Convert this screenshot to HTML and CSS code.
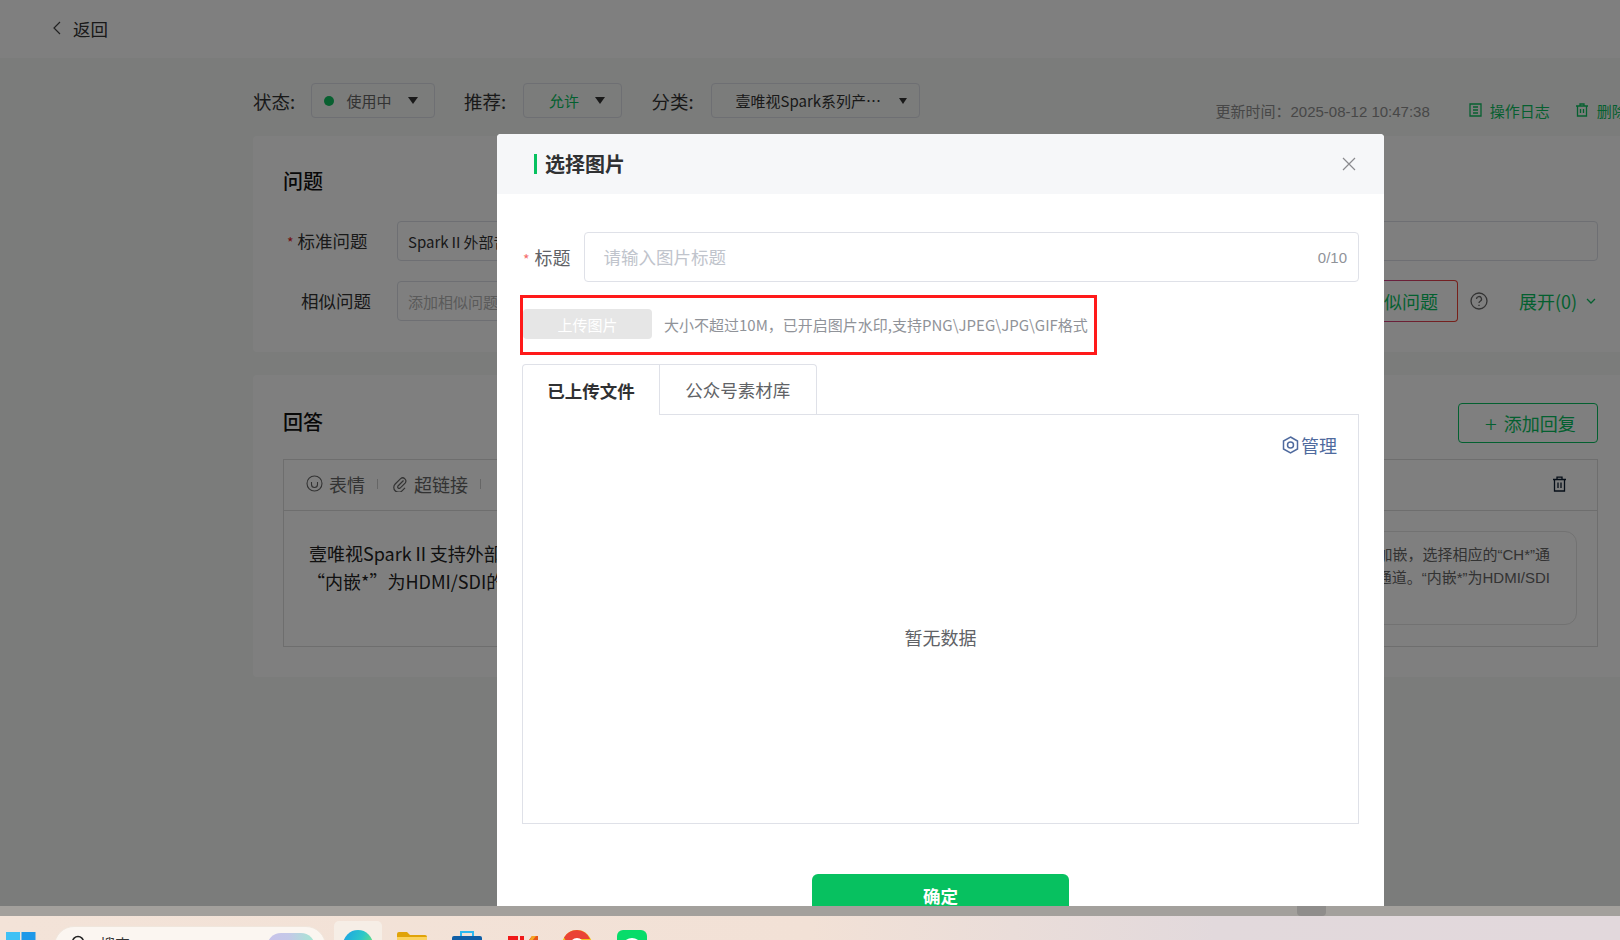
FILE: index.html
```html
<!DOCTYPE html>
<html lang="zh-CN">
<head>
<meta charset="utf-8">
<title>选择图片</title>
<link rel="stylesheet" href="styles.css">
</head>
<body>
<div class="app">
  <div class="stage">
    <header class="topbar">
      <svg class="back-icon" width="10" height="14" viewBox="0 0 10 14"><path d="M8 1 2 7l6 6" fill="none" stroke="#444" stroke-width="1.2"/></svg>
      <span class="back-text">返回</span>
    </header>
    <main class="content">
      <div class="toolbar">
        <span class="tool-label tool-label-first">状态:</span>
        <div class="select select-status"><i class="dot"></i><span class="select-text">使用中</span><i class="caret"></i></div>
        <span class="tool-label tool-label-next">推荐:</span>
        <div class="select select-rec"><span class="select-text select-green">允许</span><i class="caret"></i></div>
        <span class="tool-label tool-label-cat">分类:</span>
        <div class="select select-cat"><span class="select-text select-dark">壹唯视Spark系列产…</span><i class="caret caret-small"></i></div>
        <div class="meta">
          <span class="updated">更新时间：2025-08-12 10:47:38</span>
          <span class="meta-link">
            <svg width="13" height="14" viewBox="0 0 13 14"><path d="M1 1h11v12H1zM4 4h5M4 7h5M4 10h5" fill="none" stroke="#0cc060" stroke-width="1.3"/></svg>
            操作日志
          </span>
          <span class="meta-link meta-link-del">
            <svg width="14" height="14" viewBox="0 0 14 14"><path d="M1 3h12M5 3V1h4v2M2.500 3v10h9V3M5.500 6v4M8.500 6v4" fill="none" stroke="#0cc060" stroke-width="1.3"/></svg>
            删除
          </span>
        </div>
      </div>
      <section class="card card-question">
        <h2 class="card-title">问题</h2>
        <div class="q-row">
          <label class="q-label"><em class="star">*</em>标准问题</label>
          <div class="q-input q-value">SparkⅡ外部音频加嵌如何设置</div>
        </div>
        <div class="q-row q-row-similar">
          <label class="q-label">相似问题</label>
          <div class="q-input q-input-similar q-placeholder">添加相似问题</div>
          <div class="similar-btn">添加相似问题</div>
          <svg class="help-icon" width="18" height="18" viewBox="0 0 18 18"><circle cx="9" cy="9" r="8" fill="none" stroke="#666" stroke-width="1.300"/><path d="M6.500 7a2.500 2.500 0 1 1 3.700 2.200C9.400 9.700 9 10.100 9 11M9 12.700v1.200" fill="none" stroke="#666" stroke-width="1.300"/></svg>
          <span class="expand">展开(0)</span>
          <svg class="expand-icon" width="10" height="6" viewBox="0 0 10 6"><path d="m1 1 4 4 4-4" fill="none" stroke="#0cc060" stroke-width="1.300"/></svg>
        </div>
      </section>
      <section class="card card-answer">
        <div class="answer-head">
          <h2 class="card-title">回答</h2>
          <div class="add-reply"><span class="plus">+</span>添加回复</div>
        </div>
        <div class="editor">
          <div class="editor-bar">
            <svg class="tool-icon" width="17" height="17" viewBox="0 0 17 17"><circle cx="8.500" cy="8.500" r="7.500" fill="none" stroke="#666" stroke-width="1.100"/><path d="M5.500 7v2.500a3 3 0 0 0 6 0V7" fill="none" stroke="#666" stroke-width="1.100"/></svg>
            <span class="tool-text">表情</span>
            <i class="tool-sep"></i>
            <svg class="tool-icon" width="16" height="16" viewBox="0 0 16 16"><path d="M11.500 4.500 6 10a1.500 1.500 0 0 0 2.100 2.100l5-5a3.200 3.200 0 0 0-4.500-4.500L3.200 8a4.800 4.800 0 0 0 6.800 6.800l3-3" fill="none" stroke="#666" stroke-width="1.200"/></svg>
            <span class="tool-text">超链接</span>
            <i class="tool-sep"></i>
            <span class="tool-text">素材</span>
            <svg class="editor-trash" width="15" height="16" viewBox="0 0 15 16"><path d="M1 3.500h13M5 3.500V1.200h5v2.300M2.500 3.500V15h10V3.500M6 6.500v5.500M9 6.500v5.500" fill="none" stroke="#0c1c30" stroke-width="1.300"/></svg>
          </div>
          <div class="editor-body">
            <div class="answer-text">
              <p>壹唯视SparkⅡ支持外部音频加嵌，选择相应的“CH*”通道即可。</p>
              <p class="answer-second">“内嵌*”为HDMI/SDI的内嵌音频通道。</p>
            </div>
            <div class="bubble">
              <p>壹唯视SparkⅡ支持外部音频加嵌，选择相应的“CH*”通</p>
              <p>道，即可加嵌到对应通道。“内嵌*”为HDMI/SDI</p>
            </div>
          </div>
        </div>
      </section>
    </main>

    <div class="overlay"></div>

    <div class="dialog">
      <div class="dialog-head">
        <span class="dialog-title">选择图片</span>
        <svg class="dialog-close" width="14" height="14" viewBox="0 0 14 14"><path d="m1 1 12 12M13 1 1 13" fill="none" stroke="#8a8a8e" stroke-width="1.200"/></svg>
      </div>
      <div class="dialog-body">
        <div class="form-row">
          <label class="form-label"><em class="star star-light">*</em>标题</label>
          <div class="form-input">
            <span class="placeholder">请输入图片标题</span>
            <span class="counter">0/10</span>
          </div>
        </div>
        <div class="upload-row">
          <div class="upload-btn">上传图片</div>
          <span class="upload-hint">大小不超过10M，已开启图片水印,支持PNG\JPEG\JPG\GIF格式</span>
        </div>
        <div class="tabs">
          <div class="tab tab-active">已上传文件</div>
          <div class="tab">公众号素材库</div>
        </div>
        <div class="panel">
          <div class="manage">
            <svg width="17" height="18" viewBox="0 0 17 18"><path d="M8.500 1 15.500 5v8l-7 4-7-4V5z" fill="none" stroke="#4f6a9e" stroke-width="1.500"/><circle cx="8.500" cy="9" r="3" fill="none" stroke="#4f6a9e" stroke-width="1.500"/></svg>
            <span>管理</span>
          </div>
          <div class="empty">暂无数据</div>
        </div>
        <div class="dialog-foot">
          <div class="confirm">确定</div>
        </div>
      </div>
      <div class="annotation"></div>
    </div>
  </div>

  <div class="strip"><i class="strip-tile"></i></div>

  <footer class="taskbar">
    <svg class="tb-win" width="30" height="30" viewBox="0 0 30 30"><rect width="14" height="14" fill="#3fc1f5"/><rect x="15.500" width="14" height="14" fill="#1e98e8"/><rect y="15.500" width="14" height="14" fill="#1e98e8"/><rect x="15.500" y="15.500" width="14" height="14" fill="#0f6fc6"/></svg>
    <div class="tb-search">
      <svg class="tb-search-icon" width="16" height="16" viewBox="0 0 16 16"><circle cx="7" cy="7" r="5.500" fill="none" stroke="#222" stroke-width="1.500"/><path d="m11 11 4 4" stroke="#222" stroke-width="1.500"/></svg>
      <span class="tb-search-text">搜索</span>
      <span class="tb-blob"></span>
    </div>
    <div class="tb-active">
      <svg width="30" height="30" viewBox="0 0 30 30"><defs><linearGradient id="edge" x1="0" y1="0" x2="1" y2=".5"><stop offset="0" stop-color="#1ba0e8"/><stop offset=".6" stop-color="#2cc8c8"/><stop offset="1" stop-color="#6ee07a"/></linearGradient></defs><circle cx="15" cy="15" r="15" fill="url(#edge)"/><ellipse cx="12" cy="17" rx="9" ry="6" fill="#0f72c4"/></svg>
    </div>
    <svg class="tb-folder" width="30" height="30" viewBox="0 0 30 30"><path d="M0 2a2 2 0 0 1 2-2h8l3 3h15a2 2 0 0 1 2 2v25H0z" fill="#e0a308"/><rect y="5" width="30" height="25" fill="#fbd25f"/></svg>
    <svg class="tb-store" width="30" height="32" viewBox="0 0 30 32"><path d="M9 6V2h12v4" fill="none" stroke="#2bb8f0" stroke-width="2"/><path d="M0 8a2 2 0 0 1 2-2h26a2 2 0 0 1 2 2v24H0z" fill="#0f5ea6"/></svg>
    <svg class="tb-red" width="30" height="30" viewBox="0 0 30 30"><path d="M0 2h10v28H0zM12 2h4v28h-4z" fill="#f01818"/><path d="M18 10 24 2h6v6l-6 6z" fill="#e8551a"/><path d="M24 2h4l-8 10h-2z" fill="#f5a623"/></svg>
    <svg class="tb-chrome" width="30" height="30" viewBox="0 0 30 30"><circle cx="15" cy="15" r="15" fill="#f5c518"/><path d="M15 0a15 15 0 0 0-13 7.500l6.500 11L15 9h13A15 15 0 0 0 15 0z" fill="#ea4335"/><circle cx="15" cy="15" r="7" fill="#fff"/><circle cx="15" cy="15" r="5" fill="#3b7be8"/></svg>
    <svg class="tb-wechat" width="30" height="30" viewBox="0 0 30 30"><rect width="30" height="30" rx="6" fill="#07dc6a"/><ellipse cx="15" cy="14" rx="8" ry="6" fill="#fff"/></svg>
  </footer>
</div>
</body>
</html>
```
FILE: styles.css
```css
* { box-sizing: border-box; }
html, body { margin: 0; padding: 0; }
body { font-family: "Noto Sans CJK SC", "Noto Sans", sans-serif; background: #f6f8f6; color: #303133; }
p, h2 { margin: 0; }
em { font-style: normal; }

.app { width: 1620px; height: 940px; display: flex; flex-direction: column; overflow: hidden; }
.stage { position: relative; height: 906px; overflow: hidden; flex: none; }

.topbar { height: 58px; background: #fff; display: flex; align-items: center; padding: 0 0 2px 52px; }
.back-text { margin-left: 11px; font-size: 17.500px; color: #333; }

.content { margin-left: 253px; width: 1420px; }
.toolbar { display: flex; align-items: center; height: 35px; margin-top: 25px; white-space: nowrap; }
.tool-label { font-size: 18.500px; color: #333; width: 59px; }
.tool-label-first { width: 58px; }
.tool-label-next { margin-left: 29.500px; }
.tool-label-cat { margin-left: 30px; }
.select { height: 35px; border: 1px solid #dcdfe6; border-radius: 4px; display: flex; align-items: center; }
.select-status { width: 123.500px; padding-left: 11.500px; }
.select-rec { width: 98.500px; padding-left: 25px; }
.select-cat { width: 209px; padding-left: 24px; }
.dot { width: 10px; height: 10px; border-radius: 50%; background: #10c060; margin-right: 13px; }
.select-text { font-size: 15px; color: #666; }
.select-green { color: #07c160; }
.select-dark { color: #333; width: 145px; }
.caret { width: 0; height: 0; border-left: 5.500px solid transparent; border-right: 5.500px solid transparent; border-top: 7px solid #333; margin-left: auto; margin-right: 16px; }
.caret-small { border-left-width: 4.500px; border-right-width: 4.500px; border-top-width: 6px; margin-right: 12px; }
.meta { display: flex; align-items: center; margin-left: 296px; margin-top: 19px; }
.updated { font-family: "Liberation Sans", "Noto Sans CJK SC", sans-serif; font-size: 15px; color: #8f8f8f; }
.meta-link { display: flex; align-items: center; gap: 8px; margin-left: 39px; font-size: 15px; color: #0cc060; }
.meta-link-del { margin-left: 25px; }

.card { background: #fff; border-radius: 4px; padding-left: 30px; padding-right: 75px; }
.card-question { height: 216px; margin-top: 18px; }
.card-answer { height: 302px; margin-top: 23px; }
.card-title { font-size: 20px; font-weight: 500; color: #111; line-height: 28px; }
.card-question .card-title { padding-top: 31px; height: 60px; }
.q-row { display: flex; align-items: center; height: 40px; margin-top: 25px; }
.q-row-similar { margin-top: 20px; }
.q-label { width: 114px; font-size: 17.500px; color: #333; padding-left: 18px; white-space: nowrap; padding-bottom: 1px; }
.q-label:has(.star) { padding-left: 4px; }
.star { color: #e02020; font-size: 14px; margin-right: 4px; }
.q-input { flex: 1; height: 40px; border: 1px solid #dcdfe6; border-radius: 4px; padding-left: 10px; display: flex; align-items: center; font-size: 15px; overflow: hidden; white-space: nowrap; }
.q-value { color: #333; }
.q-placeholder { color: #b5b5b5; }
.q-input-similar { flex: none; width: 918px; }
.similar-btn { margin-left: 0; width: 143px; height: 42px; border: 1px solid transparent; border-radius: 4px; background: linear-gradient(#fff, #fff) padding-box, linear-gradient(100deg, #b040d0, #f04030) border-box; color: #07c160; font-size: 18px; display: flex; align-items: center; padding-left: 14px; white-space: nowrap; }
.help-icon { margin-left: 12px; flex: none; }
.expand { margin-left: 31px; color: #07c160; font-size: 18px; white-space: nowrap; }
.expand-icon { margin-left: 9px; flex: none; }

.answer-head { display: flex; align-items: flex-start; justify-content: space-between; padding-top: 28px; height: 84px; }
.answer-head .card-title { margin-top: 5px; }
.add-reply { width: 140px; height: 40px; border: 1px solid #07c160; border-radius: 4px; display: flex; align-items: center; padding-left: 26px; color: #07c160; font-size: 18px; }
.plus { font-size: 22px; margin-right: 7px; line-height: 1; font-weight: 300; }
.editor { border: 1px solid #dcdcdc; height: 188px; }
.editor-bar { height: 51px; border-bottom: 1px solid #dcdcdc; display: flex; align-items: center; padding: 0 30px 3px 22px; }
.tool-icon { flex: none; }
.tool-text { margin-left: 6px; font-size: 18px; color: #666; white-space: nowrap; }
.tool-sep { width: 1px; height: 10px; background: #ccc; margin: 0 12px; }
.tool-sep + .tool-icon { margin-left: 2px; }
.editor-trash { margin-left: auto; }
.editor-body { display: flex; justify-content: space-between; padding: 20px 20px 0 25px; }
.answer-text { font-size: 18px; line-height: 27.600px; color: #222; white-space: nowrap; padding-top: 9px; }
.answer-second { text-indent: -2px; }
.bubble { width: 500px; height: 94px; border: 1px solid #e4e4e4; border-radius: 12px; background: #fff; padding: 11px 26px 0 0; font-family: "Liberation Sans", "Noto Sans CJK SC", sans-serif; font-size: 15px; line-height: 23px; color: #666; white-space: nowrap; text-align: right; overflow: hidden; }

.overlay { position: absolute; inset: 0; background: rgba(0, 0, 0, .5); }

.dialog { position: absolute; left: 497px; top: 134px; width: 887px; background: #fff; border-radius: 4px 4px 0 0; }
.dialog-head { height: 60px; background: #f6f7f9; display: flex; align-items: center; justify-content: space-between; padding: 0 28px 0 37px; border-radius: 4px 4px 0 0; }
.dialog-title { border-left: 3px solid #07c160; padding-left: 8px; height: 20px; line-height: 20px; font-size: 20px; font-weight: 700; color: #303133; }
.dialog-body { padding: 38px 25px 0; }
.form-row { display: flex; align-items: center; }
.form-label { width: 61.500px; font-size: 18px; color: #606266; white-space: nowrap; }
.star-light { color: #f56c6c; margin-left: 1px; margin-right: 5px; }
.form-input { flex: 1; height: 50px; border: 1px solid #dfe1e8; border-radius: 4px; display: flex; align-items: center; justify-content: space-between; padding: 0 11px 0 19px; }
.placeholder { font-size: 17.500px; color: #c0c4cc; padding-bottom: 2px; }
.counter { font-family: "Liberation Sans", sans-serif; font-size: 15px; color: #909399; }
.upload-row { display: flex; align-items: center; margin-top: 27px; margin-left: 1px; }
.upload-btn { width: 129px; height: 30px; background: #e6e6e6; border-radius: 4px; color: #fff; font-size: 15px; display: flex; align-items: center; justify-content: center; }
.upload-hint { margin-left: 12px; font-size: 15px; color: #909399; white-space: nowrap; }
.tabs { display: flex; margin-top: 25px; height: 50px; }
.tab { width: 156.500px; border: 1px solid #dfe1e8; border-left: 0; border-bottom: 0; border-radius: 0 4px 0 0; font-size: 17.500px; color: #606266; display: flex; align-items: center; justify-content: center; }
.tab-active { width: 138px; border-left: 1px solid #dfe1e8; border-radius: 4px 0 0 0; background: #fff; color: #303133; font-weight: 700; position: relative; height: 51px; }
.panel { height: 410px; border: 1px solid #dfe1e8; display: flex; flex-direction: column; padding-bottom: 7px; }
.manage { display: flex; align-items: center; justify-content: flex-end; gap: 2px; height: 26px; margin-top: 17px; padding-right: 21px; font-size: 18px; color: #4f6a9e; }
.empty { flex: 1; display: flex; align-items: center; justify-content: center; font-size: 18px; color: #606266; }
.dialog-foot { display: flex; justify-content: center; margin-top: 50px; }
.confirm { width: 257px; height: 43px; background: #07c160; border-radius: 6px; color: #fff; font-size: 17.500px; font-weight: 700; display: flex; align-items: center; justify-content: center; }
.annotation { position: absolute; left: 23px; top: 161px; width: 577px; height: 60px; border: 3px solid #ff1a1a; }

.strip { height: 10px; flex: none; background: #a3a09c; display: flex; justify-content: flex-start; padding-left: 1297px; }
.strip-tile { width: 29px; height: 10px; background: #8f8d8b; border-radius: 0 0 4px 4px; }
.taskbar { height: 24px; flex: none; overflow: hidden; background: linear-gradient(90deg, #f3e3d8 0%, #f2e1d6 50%, #e2d9dc 75%, #e2d8dc 100%); display: flex; align-items: flex-start; padding-left: 6px; }
.tb-win { margin-top: 16px; flex: none; }
.tb-search { width: 272px; height: 40px; margin-top: 10px; margin-left: 18px; background: #fbf6f1; border-radius: 20px; border: 1px solid #f0e6dc; display: flex; align-items: flex-start; flex: none; padding: 8px 10px 0 16px; }
.tb-search-text { margin-left: 13px; font-size: 15px; line-height: 18px; color: #333; }
.tb-blob { margin-left: auto; margin-top: -2px; width: 48px; height: 28px; border-radius: 14px; background: linear-gradient(90deg, #c9c3ea, #c4c8e8 45%, #a5e8d2); }
.tb-active { width: 48px; height: 40px; margin-top: 5px; margin-left: 8px; background: #f6eee6; border-radius: 5px; display: flex; justify-content: center; padding-top: 9px; flex: none; }
.tb-folder { margin-top: 16px; margin-left: 15px; flex: none; }
.tb-store { margin-top: 14px; margin-left: 25px; flex: none; }
.tb-red { margin-top: 18px; margin-left: 26px; flex: none; }
.tb-chrome { margin-top: 14px; margin-left: 23.500px; flex: none; }
.tb-wechat { margin-top: 14px; margin-left: 25.500px; flex: none; }
```
